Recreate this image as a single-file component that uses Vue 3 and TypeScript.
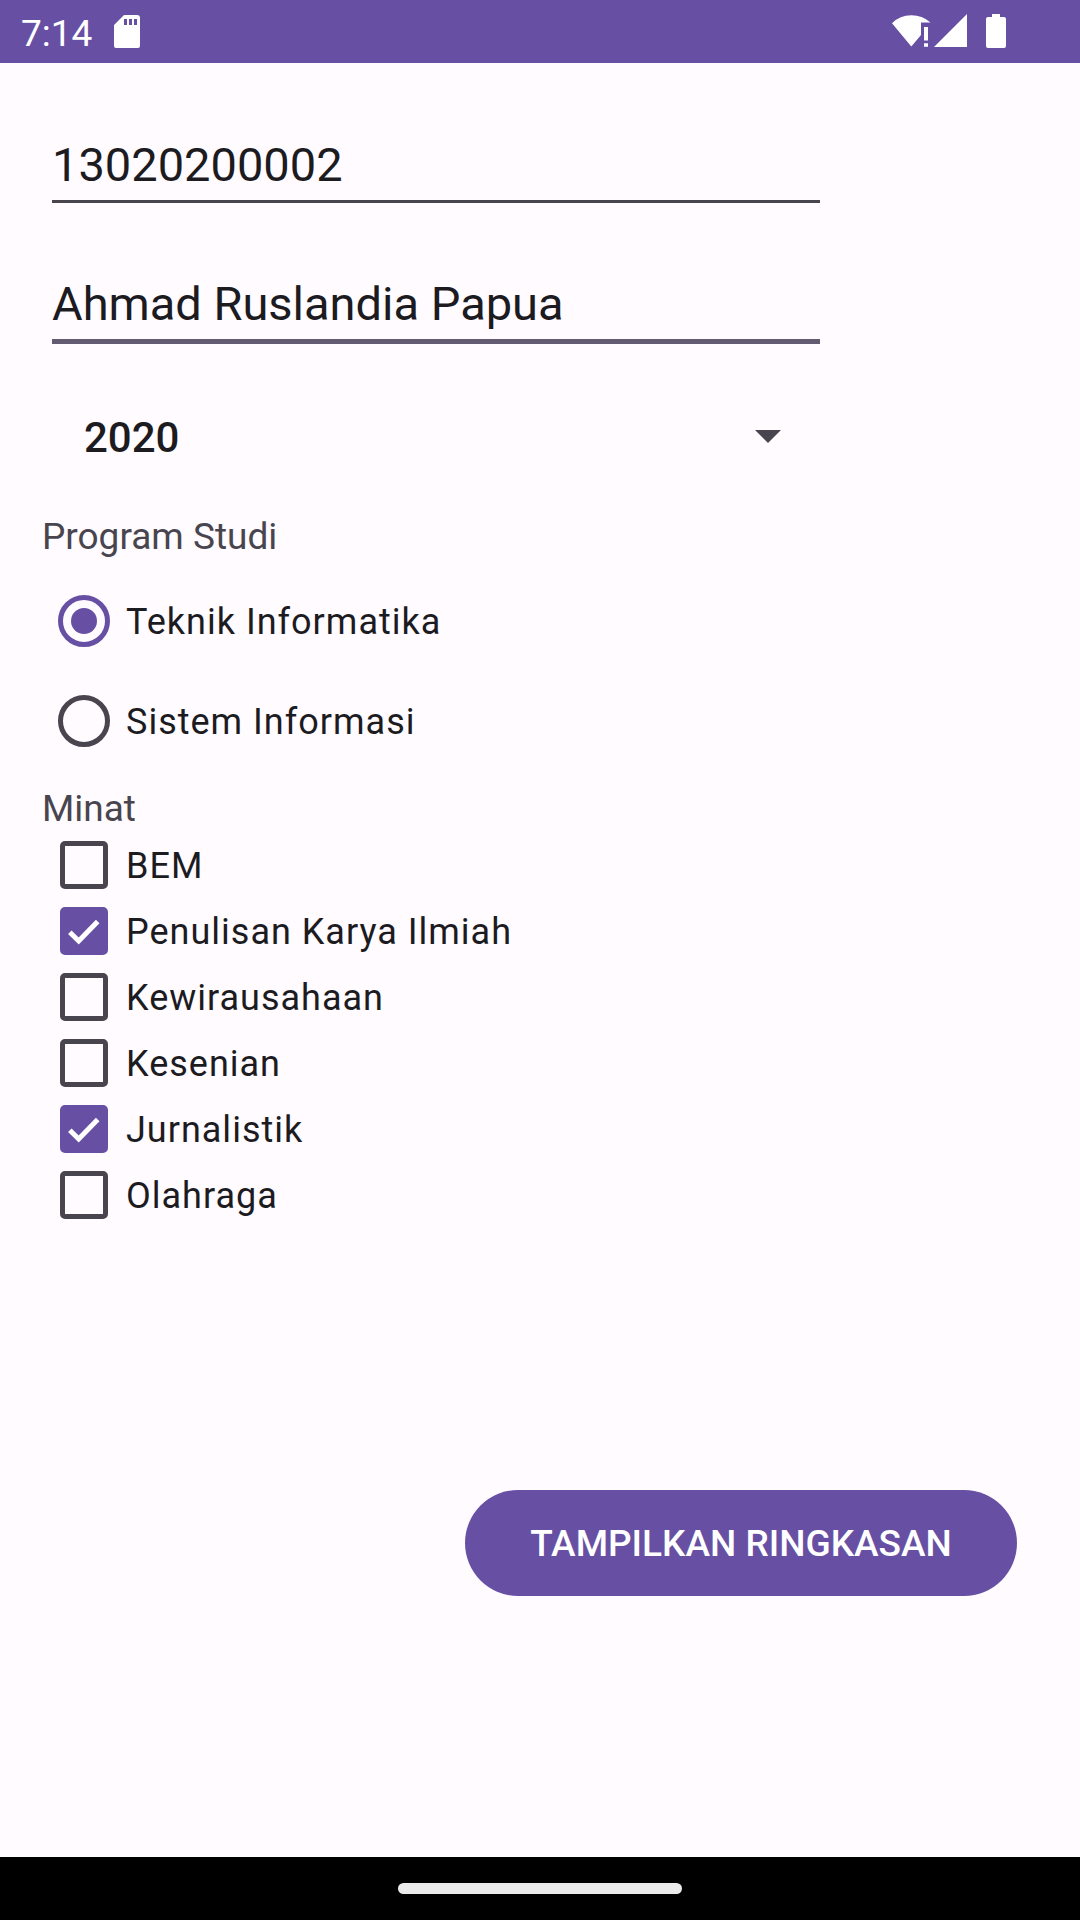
<script setup lang="ts">
import { ref } from 'vue'

const studentId = ref<string>('13020200002')
const fullName = ref<string>('Ahmad Ruslandia Papua')
const year = ref<string>('2020')
const years: string[] = ['2018', '2019', '2020', '2021', '2022']

const programs: string[] = ['Teknik Informatika', 'Sistem Informasi']
const program = ref<string>('Teknik Informatika')

const interests: string[] = [
  'BEM',
  'Penulisan Karya Ilmiah',
  'Kewirausahaan',
  'Kesenian',
  'Jurnalistik',
  'Olahraga',
]
const chosen = ref<string[]>(['Penulisan Karya Ilmiah', 'Jurnalistik'])
</script>

<template>
  <div class="screen">
    <header class="status">
      <span class="time">7:14</span>
      <svg class="sd" width="26" height="34" viewBox="0 0 26 34" aria-hidden="true">
        <path fill="#fff" fill-rule="evenodd" d="M10 0H23a3 3 0 0 1 3 3V31a2 2 0 0 1-2 2H2a2 2 0 0 1-2-2V10zM10 4v6h3V4zM15 4v6h3V4zM20 4v6h3V4z" />
      </svg>
      <div class="signals">
        <svg width="39" height="34" viewBox="0 0 39 34" aria-hidden="true">
          <path fill="#fff" d="M0 9.200A28 28 0 0 1 38.500 8.500H29V21L19.300 32.500z" />
          <path fill="#fff" d="M32 13h4v13.500h-4zM32 29.300h4v3.500h-4z" />
        </svg>
        <svg class="cell" width="33" height="34" viewBox="0 0 33 34" aria-hidden="true">
          <path fill="#fff" d="M0 33L33 0V33z" />
        </svg>
        <svg class="battery" width="20" height="34" viewBox="0 0 20 34" aria-hidden="true">
          <path fill="#fff" d="M6 0h8v3h4a2 2 0 0 1 2 2V32a2 2 0 0 1-2 2H2a2 2 0 0 1-2-2V5a2 2 0 0 1 2-2h4z" />
        </svg>
      </div>
    </header>

    <form class="form" @submit.prevent>
      <input v-model="studentId" class="field" type="text" inputmode="numeric" aria-label="NIM" />
      <input v-model="fullName" class="field active" type="text" aria-label="Nama" />

      <div class="spinner">
        <select v-model="year" aria-label="Angkatan">
          <option v-for="y in years" :key="y" :value="y">{{ y }}</option>
        </select>
        <svg class="caret" width="26" height="13" viewBox="0 0 26 13" aria-hidden="true">
          <path fill="#49454f" d="M0 0H26L13 13z" />
        </svg>
      </div>

      <fieldset class="programs">
        <legend>Program Studi</legend>
        <label v-for="p in programs" :key="p" class="choice tall">
          <input v-model="program" class="radio" type="radio" name="program" :value="p" />
          <span class="caption">{{ p }}</span>
        </label>
      </fieldset>

      <fieldset class="interests">
        <legend>Minat</legend>
        <label v-for="i in interests" :key="i" class="choice">
          <span class="tick">
            <input v-model="chosen" class="box" type="checkbox" :value="i" />
            <svg v-if="chosen.includes(i)" width="48" height="48" viewBox="0 0 48 48" aria-hidden="true">
              <path d="M9.800 25.200L18.700 34L37.700 14.500" fill="none" stroke="#fff" stroke-width="5" />
            </svg>
          </span>
          <span class="caption">{{ i }}</span>
        </label>
      </fieldset>

      <div class="actions">
        <button type="submit">TAMPILKAN RINGKASAN</button>
      </div>
    </form>

    <footer class="nav"><span class="handle"></span></footer>
  </div>
</template>

<style>
body {
  margin: 0;
}
</style>

<style scoped>
.screen {
  display: flex;
  flex-direction: column;
  box-sizing: border-box;
  min-height: 100vh;
  background: #fffbff;
  color: #1c1b1f;
  font-family: Roboto, sans-serif;
  font-size: 37px;
  line-height: 43px;
}

.status {
  display: flex;
  align-items: flex-start;
  box-sizing: border-box;
  height: 63px;
  padding: 12px 74px 0 21px;
  background: #6750a4;
  color: #fff;
}

.sd {
  margin: 3px 0 0 22px;
}

.signals {
  display: flex;
  margin: 2px 0 0 auto;
}

.cell {
  margin-left: 3px;
}

.battery {
  margin-left: 19px;
}

.form {
  display: flex;
  flex: 1;
  flex-direction: column;
  padding: 74px 63px 0 42px;
}

.field {
  box-sizing: content-box;
  height: 55px;
  margin: 0 197px 73px 10px;
  padding: 0 0 8px;
  border: 0;
  border-bottom: 3px solid #49454f;
  border-radius: 0;
  outline: 0;
  background: transparent;
  color: inherit;
  font: 400 47px/55px Roboto, sans-serif;
}

.field.active {
  margin-bottom: 69px;
  border-bottom: 5px solid #625b71;
}

.spinner {
  position: relative;
  display: flex;
  margin: 0 197px 53px 0;
}

.spinner select {
  flex: 1;
  height: 49px;
  margin: 0;
  padding: 0 42px;
  border: 0;
  outline: 0;
  appearance: none;
  background: transparent;
  color: inherit;
  font: 500 42px/49px Roboto, sans-serif;
}

.caret {
  position: absolute;
  top: 17px;
  right: 39px;
  pointer-events: none;
}

fieldset {
  min-width: 0;
  margin: 0;
  padding: 0;
  border: 0;
}

legend {
  padding: 0;
  color: #49454f;
}

.programs {
  margin-bottom: 16px;
}

.programs legend {
  margin-bottom: 13px;
}

.interests legend {
  margin-bottom: 2px;
}

.choice {
  display: flex;
  align-items: center;
  gap: 18px;
  height: 66px;
  padding-left: 18px;
  font-size: 36px;
  letter-spacing: 1px;
}

.choice.tall {
  gap: 16px;
  height: 100px;
  padding-left: 16px;
}

.caption {
  padding-top: 2px;
}

.radio,
.box {
  flex: none;
  box-sizing: border-box;
  margin: 0;
  border: 5px solid #49454f;
  appearance: none;
}

.radio {
  display: grid;
  place-items: center;
  width: 52px;
  height: 52px;
  border-radius: 50%;
}

.radio:checked {
  border-color: #6750a4;
}

.radio:checked::before {
  width: 26px;
  height: 26px;
  border-radius: 50%;
  background: #6750a4;
  content: '';
}

.tick {
  display: grid;
}

.tick > * {
  grid-area: 1 / 1;
}

.tick svg {
  pointer-events: none;
}

.box {
  width: 48px;
  height: 48px;
  border-radius: 5px;
}

.box:checked {
  border-color: #6750a4;
  background: #6750a4;
}

.actions {
  display: flex;
  flex: 1;
  align-items: center;
  justify-content: flex-end;
}

button {
  min-width: 552px;
  height: 106px;
  padding: 2px 60px 0;
  border: 0;
  border-radius: 53px;
  background: #6750a4;
  color: #fff;
  font: 500 37px/43px Roboto, sans-serif;
}

.nav {
  display: flex;
  align-items: center;
  justify-content: center;
  height: 63px;
  background: #000;
}

.handle {
  width: 284px;
  height: 11px;
  border-radius: 6px;
  background: #ebebeb;
}
</style>
